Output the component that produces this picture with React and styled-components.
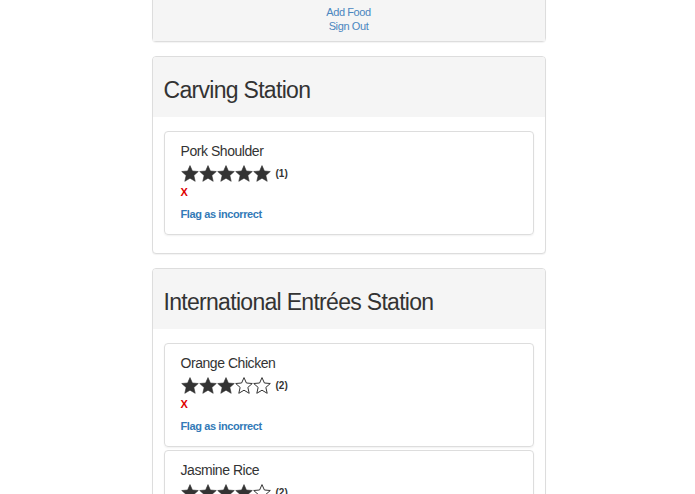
import React from "react";
import styled, { createGlobalStyle } from "styled-components";

const Global = createGlobalStyle`
  html, body { margin: 0; padding: 0; background: #fff; }
  body { font-family: "Liberation Sans", Arial, sans-serif; color: #333; }
`;

const Page = styled.div`
  padding-left: 2px;
`;

const Container = styled.div`
  width: 394px;
  margin: 0 auto;
  display: flex;
  flex-direction: column;
  gap: 14px;
`;

const Panel = styled.section`
  border: 1px solid #ddd;
  border-radius: 4px;
  background: #fff;
  box-shadow: 0 1px 1px rgba(0,0,0,0.05);
  margin-top: ${(p) => (p.$top ? "-1px" : "0")};
  border-top-left-radius: ${(p) => (p.$top ? "0" : "4px")};
  border-top-right-radius: ${(p) => (p.$top ? "0" : "4px")};
`;

const NavBody = styled.div`
  background: #f5f5f5;
  padding: 5px 0 8px;
  display: flex;
  flex-direction: column;
  align-items: center;
`;

const NavLink = styled.a`
  font-size: 11px;
  line-height: 14px;
  letter-spacing: -0.4px;
  color: #4a86c0;
  text-decoration: none;
`;

const Heading = styled.div`
  background: #f5f5f5;
  height: 60px;
  padding: 0 11px;
  display: flex;
  align-items: center;
  border-top-left-radius: 3px;
  border-top-right-radius: 3px;
`;

const Title = styled.h2`
  margin: 7px 0 0;
  font-size: 23px;
  letter-spacing: -0.7px;
  font-weight: 400;
  color: #333;
`;

const Body = styled.div`
  padding: 14px 11px 18px;
  display: flex;
  flex-direction: column;
  gap: 3px;
`;

const Card = styled.div`
  border: 1px solid #ddd;
  border-radius: 4px;
  box-shadow: 0 1px 2px rgba(0,0,0,0.06);
  padding: 9px 16px 13px;
  display: flex;
  flex-direction: column;
`;

const Name = styled.div`
  font-size: 14px;
  line-height: 20px;
  letter-spacing: -0.45px;
  color: #333;
`;

const RatingRow = styled.div`
  display: flex;
  align-items: center;
  height: 21px;
  margin-top: 2px;
`;

const Stars = styled.div`
  display: flex;
`;

const Count = styled.span`
  font-size: 10px;
  font-weight: 700;
  margin-left: 5px;
  color: #333;
`;

const Remove = styled.div`
  color: #e00000;
  font-weight: 700;
  font-size: 11px;
  line-height: 14px;
  margin-top: 1px;
`;

const Flag = styled.a`
  color: #337ab7;
  font-weight: 700;
  font-size: 11px;
  letter-spacing: -0.4px;
  line-height: 14px;
  margin-top: 8px;
  text-decoration: none;
`;

const STAR =
  "M9 0.6 L11.4 6 L17.3 6.5 L12.85 10.4 L14.2 16.3 L9 13.2 L3.8 16.3 L5.15 10.4 L0.7 6.5 L6.6 6 Z";

function Star({ filled }) {
  return (
    <svg width="18" height="17" viewBox="0 0 18 17">
      <path
        d={STAR}
        fill={filled ? "#333" : "none"}
        stroke="#333"
        strokeWidth={filled ? "0.6" : "1"}
        strokeLinejoin="round"
      />
    </svg>
  );
}

function FoodCard({ name, rating, count }) {
  return (
    <Card>
      <Name>{name}</Name>
      <RatingRow>
        <Stars>
          {[0, 1, 2, 3, 4].map((i) => (
            <Star key={i} filled={i < rating} />
          ))}
        </Stars>
        <Count>({count})</Count>
      </RatingRow>
      <Remove>X</Remove>
      <Flag href="#">Flag as incorrect</Flag>
    </Card>
  );
}

const stations = [
  { title: "Carving Station", foods: [{ name: "Pork Shoulder", rating: 5, count: 1 }] },
  {
    title: "International Entrées Station",
    foods: [
      { name: "Orange Chicken", rating: 3, count: 2 },
      { name: "Jasmine Rice", rating: 4, count: 2 },
    ],
  },
];

export default function App() {
  return (
    <>
      <Global />
      <Page>
        <Container>
          <Panel $top>
            <NavBody>
              <NavLink href="#">Add Food</NavLink>
              <NavLink href="#">Sign Out</NavLink>
            </NavBody>
          </Panel>
          {stations.map((s) => (
            <Panel key={s.title}>
              <Heading>
                <Title>{s.title}</Title>
              </Heading>
              <Body>
                {s.foods.map((f) => (
                  <FoodCard key={f.name} {...f} />
                ))}
              </Body>
            </Panel>
          ))}
        </Container>
      </Page>
    </>
  );
}
